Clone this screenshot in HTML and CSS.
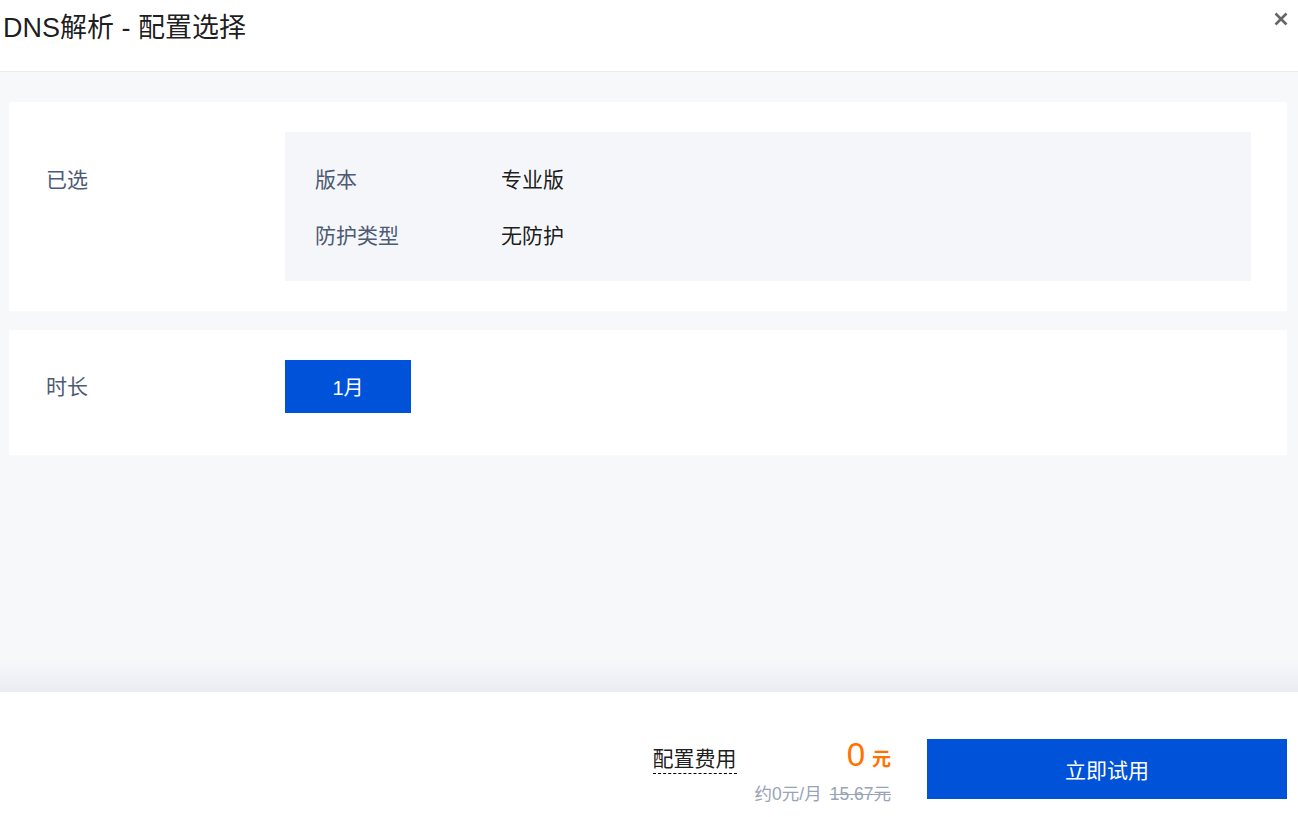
FILE: index.html
```html
<!DOCTYPE html>
<html lang="zh-CN">
<head>
<meta charset="utf-8">
<title>DNS解析 - 配置选择</title>
<link rel="stylesheet" href="styles.css">
</head>
<body>
<div class="dialog">
  <header class="dlg-head">
    <h1 class="dlg-title">DNS解析 - 配置选择</h1>
    <button class="dlg-close" aria-label="关闭">
      <svg width="14" height="14" viewBox="0 0 14 14"><path d="M1.5 1.5 L12.5 12.5 M12.5 1.5 L1.5 12.5" stroke="#666" stroke-width="2.6" stroke-linecap="butt" fill="none"/></svg>
    </button>
  </header>

  <main class="dlg-body">
    <section class="card card-selected">
      <div class="card-label label-top">已选</div>
      <div class="summary">
        <div class="summary-row"><span class="summary-key">版本</span><span class="summary-val">专业版</span></div>
        <div class="summary-row"><span class="summary-key">防护类型</span><span class="summary-val">无防护</span></div>
      </div>
    </section>
    <section class="card card-duration">
      <div class="card-label">时长</div>
      <div class="options"><button class="opt opt-active">1月</button></div>
    </section>
  </main>

  <footer class="dlg-foot">
    <div class="cost">
      <span class="cost-label">配置费用</span>
      <div class="cost-price">
        <div class="price-main"><span class="price-num">0</span><span class="price-unit">元</span></div>
        <div class="price-sub">约0元/月<s class="price-orig">15.67元</s></div>
      </div>
    </div>
    <button class="btn-primary">立即试用</button>
  </footer>

  <div class="watermark" aria-hidden="true">
    <div class="wm-row">_yangwenwb_yangwenwb_yangwenwb_yangwenwb_yangwenwb_yangwenwb_yangwenwb_</div>
    <div class="wm-row">_yangwenwb_yangwenwb_yangwenwb_yangwenwb_yangwenwb_yangwenwb_yangwenwb_</div>
    <div class="wm-row">_yangwenwb_yangwenwb_yangwenwb_yangwenwb_yangwenwb_yangwenwb_yangwenwb_</div>
    <div class="wm-row">_yangwenwb_yangwenwb_yangwenwb_yangwenwb_yangwenwb_yangwenwb_yangwenwb_</div>
    <div class="wm-row">_yangwenwb_yangwenwb_yangwenwb_yangwenwb_yangwenwb_yangwenwb_yangwenwb_</div>
    <div class="wm-row">_yangwenwb_yangwenwb_yangwenwb_yangwenwb_yangwenwb_yangwenwb_yangwenwb_</div>
    <div class="wm-row">_yangwenwb_yangwenwb_yangwenwb_yangwenwb_yangwenwb_yangwenwb_yangwenwb_</div>
    <div class="wm-row">_yangwenwb_yangwenwb_yangwenwb_yangwenwb_yangwenwb_yangwenwb_yangwenwb_</div>
    <div class="wm-row">_yangwenwb_yangwenwb_yangwenwb_yangwenwb_yangwenwb_yangwenwb_yangwenwb_</div>
  </div>
</div>
</body>
</html>
```

FILE: styles.css
```css
* { box-sizing: border-box; }

html, body {
  margin: 0;
  padding: 0;
  background: #ffffff;
}

body {
  font-family: "Liberation Sans", "Noto Sans CJK SC", sans-serif;
  color: rgba(0, 0, 0, 0.9);
}

.dialog {
  position: relative;
  width: 1298px;
  height: 817px;
  display: flex;
  flex-direction: column;
  overflow: hidden;
}

/* Header */
.dlg-head {
  height: 72px;
  flex: none;
  display: flex;
  justify-content: space-between;
  align-items: flex-start;
  padding: 10px 10px 0 3px;
  border-bottom: 1px solid #e9ecf1;
  background: #ffffff;
}

.dlg-title {
  margin: 0;
  font-size: 27px;
  line-height: 36px;
  font-weight: normal;
  color: rgba(0, 0, 0, 0.9);
}

.dlg-close {
  margin-top: 2px;
  padding: 0;
  border: 0;
  background: transparent;
  width: 14px;
  height: 14px;
  display: block;
  cursor: pointer;
}
.dlg-close svg { display: block; }

/* Body */
.dlg-body {
  flex: 1;
  padding: 30px 11px 0 9px;
  display: flex;
  flex-direction: column;
  gap: 19px;
  background: linear-gradient(to bottom, #f7f8fa 0, #f7f8fa calc(100% - 32px), #e9ecf1 100%);
}

.card {
  background: #ffffff;
  display: flex;
  padding-right: 36px;
}

.card-selected {
  padding-top: 30px;
  padding-bottom: 30px;
  align-items: flex-start;
}

.card-duration {
  padding-top: 30px;
  padding-bottom: 42px;
  align-items: center;
}

.card-label {
  width: 276px;
  flex: none;
  padding-left: 37px;
  font-size: 21px;
  line-height: 36px;
  color: #4e5b74;
}

.label-top { margin-top: 30px; }

.summary {
  flex: 1;
  background: #f5f6f9;
  padding: 30px 30px 27px;
  display: flex;
  flex-direction: column;
  gap: 20px;
}

.summary-row {
  display: flex;
  font-size: 21px;
  line-height: 36px;
}

.summary-key {
  width: 186px;
  flex: none;
  color: #4e5b74;
}

.summary-val {
  color: rgba(0, 0, 0, 0.9);
}

.options { display: flex; }

.opt {
  width: 126px;
  height: 53px;
  border: 0;
  padding: 0;
  font-family: inherit;
  font-size: 20px;
  color: #ffffff;
  background: #0052d9;
}

/* Footer */
.dlg-foot {
  height: 125px;
  flex: none;
  background: #ffffff;
  display: flex;
  justify-content: flex-end;
  align-items: flex-start;
  padding: 47px 11px 0 9px;
}

.cost {
  display: flex;
  align-items: flex-start;
  margin-top: -2px;
  margin-right: 36px;
}

.cost-label {
  margin-top: 8px;
  margin-right: 18px;
  font-size: 21px;
  line-height: 28px;
  color: rgba(0, 0, 0, 0.9);
  border-bottom: 1px dashed #000000;
}

.cost-price {
  display: flex;
  flex-direction: column;
  align-items: flex-end;
}

.price-main {
  display: flex;
  align-items: baseline;
  height: 36px;
  line-height: 36px;
  color: #ff7200;
}

.price-num {
  font-size: 33px;
}

.price-unit {
  margin-left: 7px;
  font-size: 19px;
  font-weight: bold;
}

.price-sub {
  margin-top: 10px;
  font-size: 17.5px;
  line-height: 22px;
  color: #98a3b7;
  white-space: nowrap;
}

.price-orig {
  margin-left: 8px;
  text-decoration: line-through;
}

.btn-primary {
  width: 360px;
  height: 60px;
  border: 0;
  padding: 0;
  background: #0052d9;
  color: #ffffff;
  font-family: inherit;
  font-size: 21px;
}

/* Watermark overlay */
.watermark {
  position: absolute;
  top: 10px;
  left: -5px;
  right: 0;
  bottom: 0;
  pointer-events: none;
  overflow: hidden;
  font-family: "Liberation Sans", sans-serif;
  font-size: 31px;
  line-height: 90px;
  color: rgba(0, 0, 0, 0.02);
  white-space: nowrap;
}

.wm-row { height: 90px; }
```
